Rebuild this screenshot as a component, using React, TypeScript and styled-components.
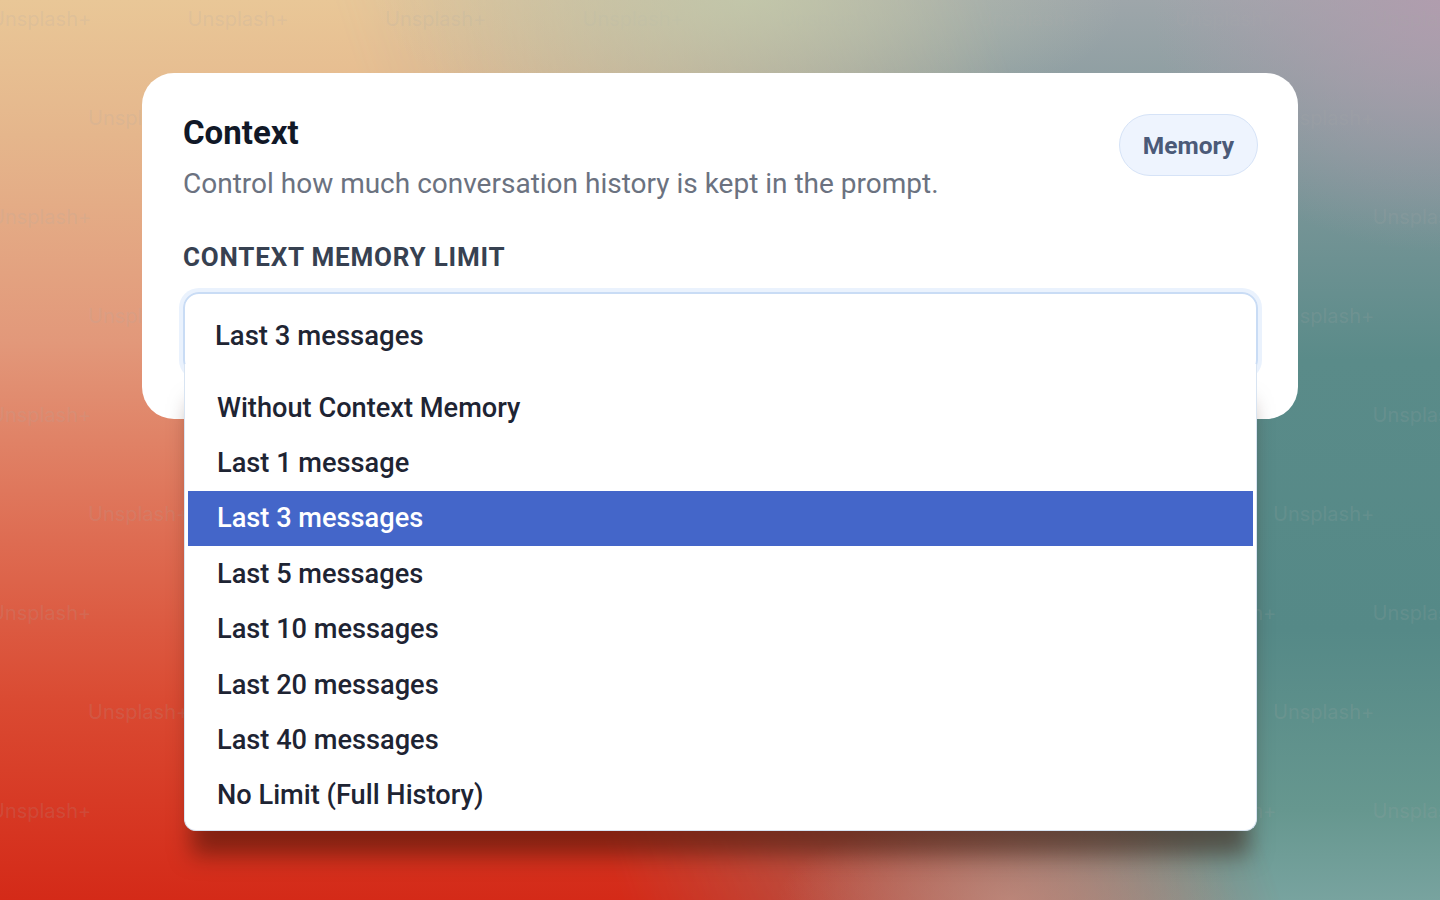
import styled, { createGlobalStyle } from "styled-components";

const GlobalStyle = createGlobalStyle`
  html, body {
    margin: 0;
    padding: 0;
    width: 100%;
    height: 100%;
    overflow: hidden;
  }
  body {
    font-family: Roboto, "Noto Sans", sans-serif;
  }
`;

const Page = styled.div`
  position: relative;
  width: 1440px;
  height: 900px;
  overflow: hidden;
  padding: 73px 142px 0;
  box-sizing: border-box;
  background:
    radial-gradient(ellipse 20% 28% at 100% 0%, rgba(178, 156, 174, 0.9) 0%, rgba(170, 156, 170, 0) 100%),
    linear-gradient(to bottom, #9ea6aa 0%, #7c9699 20%, #5a8b89 40%, #558987 70%, #66978f 90%, #78a39f 100%);

  &::before {
    content: "";
    position: absolute;
    inset: 0;
    background: linear-gradient(to bottom, #e9c797 0%, #e5b68c 15%, #e2987a 38%, #de6c52 60%, #da4a32 78%, #d42a18 100%);
    -webkit-mask-image: linear-gradient(72deg, #000 36%, rgba(0, 0, 0, 0.55) 55%, transparent 74%);
    mask-image: linear-gradient(72deg, #000 36%, rgba(0, 0, 0, 0.55) 55%, transparent 74%);
  }

  &::after {
    content: "";
    position: absolute;
    inset: 0;
    background:
      radial-gradient(ellipse 26% 15% at 52% 0%, rgba(196, 204, 172, 0.75) 0%, rgba(196, 204, 172, 0) 100%),
      radial-gradient(ellipse 16% 10% at 70% 100%, rgba(204, 150, 136, 0.6) 0%, rgba(204, 150, 136, 0) 100%);
  }
`;

const Watermarks = styled.div`
  position: absolute;
  inset: 0;
  pointer-events: none;
  display: flex;
  flex-direction: column;
  padding-top: 7px;
`;

const MarkRow = styled.div<{ $shift: number }>`
  display: flex;
  height: 99px;
  margin-left: ${(p) => p.$shift}px;
  white-space: nowrap;
`;

const Mark = styled.span`
  flex: 0 0 197.5px;
  font-family: Inter, sans-serif;
  font-size: 20px;
  color: rgba(170, 170, 170, 0.18);
`;

const Card = styled.div`
  position: relative;
  z-index: 1;
  background: #ffffff;
  border-radius: 32px;
  padding: 40px 40px 43px 41px;
`;

const Header = styled.div`
  display: flex;
  justify-content: space-between;
  align-items: flex-start;
`;

const Title = styled.h2`
  margin: 0;
  font-size: 33px;
  line-height: 40px;
  font-weight: 700;
  color: #111827;
`;

const Subtitle = styled.p`
  margin: 14px 0 0;
  font-size: 28px;
  line-height: 34px;
  color: #6b7280;
`;

const Badge = styled.span`
  display: inline-flex;
  align-items: center;
  margin-top: 1px;
  height: 62px;
  padding: 0 23px;
  box-sizing: border-box;
  border-radius: 31px;
  background: #eef4fe;
  border: 1.5px solid #d6e3f7;
  color: #4b5a78;
  font-size: 24.5px;
  font-weight: 700;
`;

const Label = styled.div`
  margin-top: 40px;
  font-size: 26px;
  line-height: 32px;
  font-weight: 700;
  letter-spacing: 0.8px;
  color: #374151;
`;

const SelectWrap = styled.div`
  position: relative;
  margin-top: 19px;
`;

const SelectBox = styled.div`
  height: 84px;
  box-sizing: border-box;
  border: 2px solid #c9dcf5;
  border-radius: 16px;
  box-shadow: 0 0 0 4px #eaf2fd;
  padding: 25px 30px 0;
  font-size: 27.5px;
  line-height: 34px;
  font-weight: 500;
  color: #1f2533;
`;

const Dropdown = styled.ul`
  position: absolute;
  top: 72px;
  left: 1px;
  right: 1px;
  margin: 0;
  list-style: none;
  padding: 16px 3px 7px;
  background: #ffffff;
  border: 1px solid #d8e4f2;
  border-top: none;
  border-radius: 0 0 12px 12px;
  box-shadow: 0 32px 22px -8px rgba(50, 15, 5, 0.5);
`;

const Option = styled.li<{ $active?: boolean }>`
  height: 55.4px;
  display: flex;
  align-items: center;
  padding-left: 29px;
  font-size: 27.2px;
  font-weight: 500;
  color: ${(p) => (p.$active ? "#ffffff" : "#1e2433")};
  background: ${(p) => (p.$active ? "#4466c9" : "transparent")};
`;

const options = [
  "Without Context Memory",
  "Last 1 message",
  "Last 3 messages",
  "Last 5 messages",
  "Last 10 messages",
  "Last 20 messages",
  "Last 40 messages",
  "No Limit (Full History)",
];

// watermarks that sit fully under the card or the open list are never seen
const isCovered = (row: number, x: number) => {
  const x2 = x + 100;
  if (row >= 1 && row <= 4 && x >= 142 && x2 <= 1298) return true;
  if (row >= 4 && x >= 184 && x2 <= 1257) return true;
  return false;
};

export default function App() {
  const rows = Array.from({ length: 9 }, (_, i) => i);
  return (
    <>
      <GlobalStyle />
      <Page>
        <Watermarks>
          {rows.map((r) => {
            const shift = r % 2 === 0 ? -10 : 88;
            return (
              <MarkRow key={r} $shift={shift}>
                {Array.from({ length: 8 }, (_, k) => (
                  <Mark key={k}>{isCovered(r, shift + k * 197.5) ? "" : "Unsplash+"}</Mark>
                ))}
              </MarkRow>
            );
          })}
        </Watermarks>

        <Card>
          <Header>
            <div>
              <Title>Context</Title>
              <Subtitle>Control how much conversation history is kept in the prompt.</Subtitle>
            </div>
            <Badge>Memory</Badge>
          </Header>

          <Label>CONTEXT MEMORY LIMIT</Label>

          <SelectWrap>
            <SelectBox>Last 3 messages</SelectBox>
            <Dropdown>
              {options.map((o) => (
                <Option key={o} $active={o === "Last 3 messages"}>
                  {o}
                </Option>
              ))}
            </Dropdown>
          </SelectWrap>
        </Card>
      </Page>
    </>
  );
}
